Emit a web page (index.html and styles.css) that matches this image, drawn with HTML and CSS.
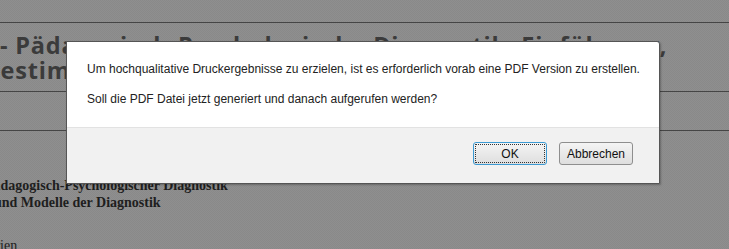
FILE: index.html
```html
<!DOCTYPE html>
<html lang="de">
<head>
  <meta charset="UTF-8" />
  <title>Diagnostik - Druckansicht</title>
  <link rel="stylesheet" href="styles.css">
</head>
<body>
  <div class="page">
    <div class="topbar"></div>
    <h1 class="title">- Pädagogisch-Psychologische Diagnostik: Einführung,<br><span class="cut">Bestimmungsstücke</span></h1>
    <div class="toolbar"></div>
    <div class="content">
      <p class="chapter first">Pädagogisch-Psychologischer Diagnostik</p>
      <p class="chapter second">und Modelle der Diagnostik</p>
      <p class="note">Kategorien</p>
    </div>
  </div>

  <div class="dialog">
    <div class="dialog-body">
      <p>Um hochqualitative Druckergebnisse zu erzielen, ist es erforderlich vorab eine PDF Version zu erstellen.</p>
      <p>Soll die PDF Datei jetzt generiert und danach aufgerufen werden?</p>
    </div>
    <div class="dialog-footer">
      <button class="btn btn-ok">OK</button>
      <button class="btn">Abbrechen</button>
    </div>
  </div>
</body>
</html>
```

FILE: styles.css
```css
html, body {
  height: 100%;
}
body {
  margin: 0;
  overflow: hidden;
  background-color: #8c8c8c;
  background-image: repeating-conic-gradient(#8f8f8f 0 25%, #898989 0 50%);
  background-size: 2px 2px;
  color: #2b2b2b;
}
.topbar {
  height: 22px;
  border-bottom: 1px solid #454545;
}
.title {
  margin: 0;
  padding: 10px 0 8px 0;
  font-family: "Open Sans", sans-serif;
  font-size: 23.5px;
  line-height: 25px;
  font-weight: bold;
  letter-spacing: 0.8px;
  color: #3b3b3b;
  white-space: nowrap;
  border-bottom: 1px solid #454545;
}
.title .cut {
  display: inline-block;
  margin-left: -16px;
}
.toolbar {
  height: 38px;
  border-bottom: 1px solid #454545;
}
.content {
  padding-top: 46px;
  font-family: "Liberation Serif", serif;
  font-size: 14px;
  color: #1e1e1e;
}
.chapter {
  margin: 0;
  font-weight: bold;
  line-height: 17px;
}
.first {
  margin-left: -15px;
}
.second {
  margin-left: -6px;
}
.note {
  margin: 27px 0 0 -45px;
  line-height: 16px;
}

.dialog {
  position: absolute;
  left: 66px;
  top: 41px;
  width: 592px;
  border: 1px solid #555;
  border-radius: 0 3px 0 0;
  background: #fff;
  font-family: "Liberation Sans", Arial, sans-serif;
  font-size: 12px;
  color: #222;
  box-shadow: 1px 1px 2px rgba(0, 0, 0, 0.25);
}
.dialog-body {
  padding: 20px 10px 21px 20px;
}
.dialog-body p {
  margin: 0 0 16px 0;
  line-height: 14px;
  white-space: nowrap;
}
.dialog-body p:last-child {
  margin-bottom: 0;
}
.dialog-footer {
  display: flex;
  justify-content: flex-end;
  gap: 12px;
  padding: 14px 26px 18px 0;
  background: #f1f1f1;
  border-top: 1px solid #e2e2e2;
}
.btn {
  width: 74px;
  height: 23px;
  padding: 0;
  font-family: "Liberation Sans", Arial, sans-serif;
  font-size: 12px;
  color: #111;
  background: linear-gradient(to bottom, #f4f4f4, #dedede);
  border: 1px solid #8e8e8e;
  border-radius: 3px;
}
.btn-ok {
  border-color: #3c9ad3;
  outline: 1px dotted #333;
  outline-offset: -3px;
}
```
